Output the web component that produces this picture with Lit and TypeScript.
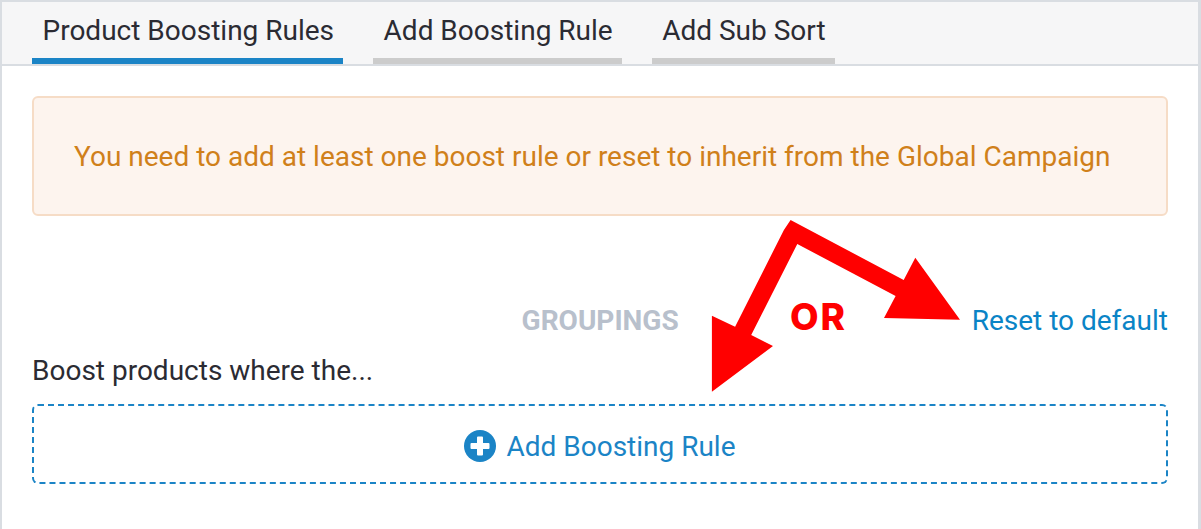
import { LitElement, html, css } from "lit";
import { customElement } from "lit/decorators.js";

@customElement("app-root")
export class AppRoot extends LitElement {
  static styles = css`
    :host {
      display: block;
      position: relative;
      box-sizing: border-box;
      height: 529px;
      font-family: Roboto, sans-serif;
      color: #2b2b33;
      background: #fff;
      border-top: 2px solid #d9dde2;
      border-left: 2px solid #d9dde2;
      border-right: 3px solid #d9dde2;
    }
    .tabs {
      display: flex;
      gap: 30px;
      height: 62px;
      padding-left: 30px;
      background: #f6f6f7;
      border-bottom: 2px solid #d9dde2;
    }
    .tab {
      display: flex;
      align-items: center;
      height: 56px;
      padding: 0 9px 0 10.5px;
      font-size: 28px;
      border-bottom: 6px solid #cccccc;
    }
    .tab.active {
      border-bottom-color: #1b84c6;
    }
    .content {
      padding: 30px 30px 0 30px;
    }
    .alert {
      display: flex;
      align-items: center;
      box-sizing: border-box;
      height: 120px;
      padding-left: 40px;
      font-size: 28px;
      color: #d0801a;
      background: #fdf4ee;
      border: 2px solid #f6dcc6;
      border-radius: 6px;
    }
    .links {
      display: flex;
      justify-content: flex-end;
      align-items: center;
      gap: 293px;
      margin-top: 87px;
      height: 34px;
      font-size: 28px;
    }
    .groupings {
      font-weight: 700;
      color: #b8c0cc;
    }
    .reset {
      color: #0a84c6;
    }
    .label {
      margin-top: 17px;
      font-size: 28px;
      line-height: 34px;
    }
    .add {
      display: flex;
      align-items: center;
      justify-content: center;
      gap: 10px;
      box-sizing: border-box;
      height: 80px;
      margin-top: 16px;
      padding-top: 4px;
      font-size: 28px;
      color: #1b84c6;
      border: 2px dashed #1b84c6;
      border-radius: 6px;
    }
    .add svg {
      width: 32px;
      height: 32px;
    }
    .arrows {
      position: absolute;
      left: -2px;
      top: -2px;
      width: 1201px;
      height: 529px;
      pointer-events: none;
    }
    .or {
      position: absolute;
      left: 788px;
      top: 293px;
      font-family: Inter, sans-serif;
      font-size: 37px;
      font-weight: 800;
      letter-spacing: 2px;
      line-height: 44px;
      color: #ff0000;
    }
  `;

  render() {
    return html`
      <div class="tabs">
        <div class="tab active">Product Boosting Rules</div>
        <div class="tab">Add Boosting Rule</div>
        <div class="tab">Add Sub Sort</div>
      </div>
      <div class="content">
        <div class="alert">
          You need to add at least one boost rule or reset to inherit from the
          Global Campaign
        </div>
        <div class="links">
          <span class="groupings">GROUPINGS</span>
          <span class="reset">Reset to default</span>
        </div>
        <div class="label">Boost products where the...</div>
        <div class="add">
          <svg viewBox="0 0 32 32">
            <circle cx="16" cy="16" r="16" fill="#1b84c6"></circle>
            <path
              d="M14 6.5h4a1 1 0 0 1 1 1V13h5.500a1 1 0 0 1 1 1v4a1 1 0 0 1-1 1H19v5.500a1 1 0 0 1-1 1h-4a1 1 0 0 1-1-1V19H7.500a1 1 0 0 1-1-1v-4a1 1 0 0 1 1-1H13V7.500a1 1 0 0 1 1-1z"
              fill="#fff"
            ></path>
          </svg>
          Add Boosting Rule
        </div>
      </div>
      <svg class="arrows" viewBox="0 0 1201 529">
        <polygon
          fill="#ff0000"
          points="790.6,220 903.7,280 915.3,257.7 960,319.7 884,318 895.6,296 797.3,244 751.2,335 773,346 711.9,391.7 711.9,315.7 735.1,326.7 783.9,230"
        ></polygon>
      </svg>
      <div class="or">OR</div>
    `;
  }
}
